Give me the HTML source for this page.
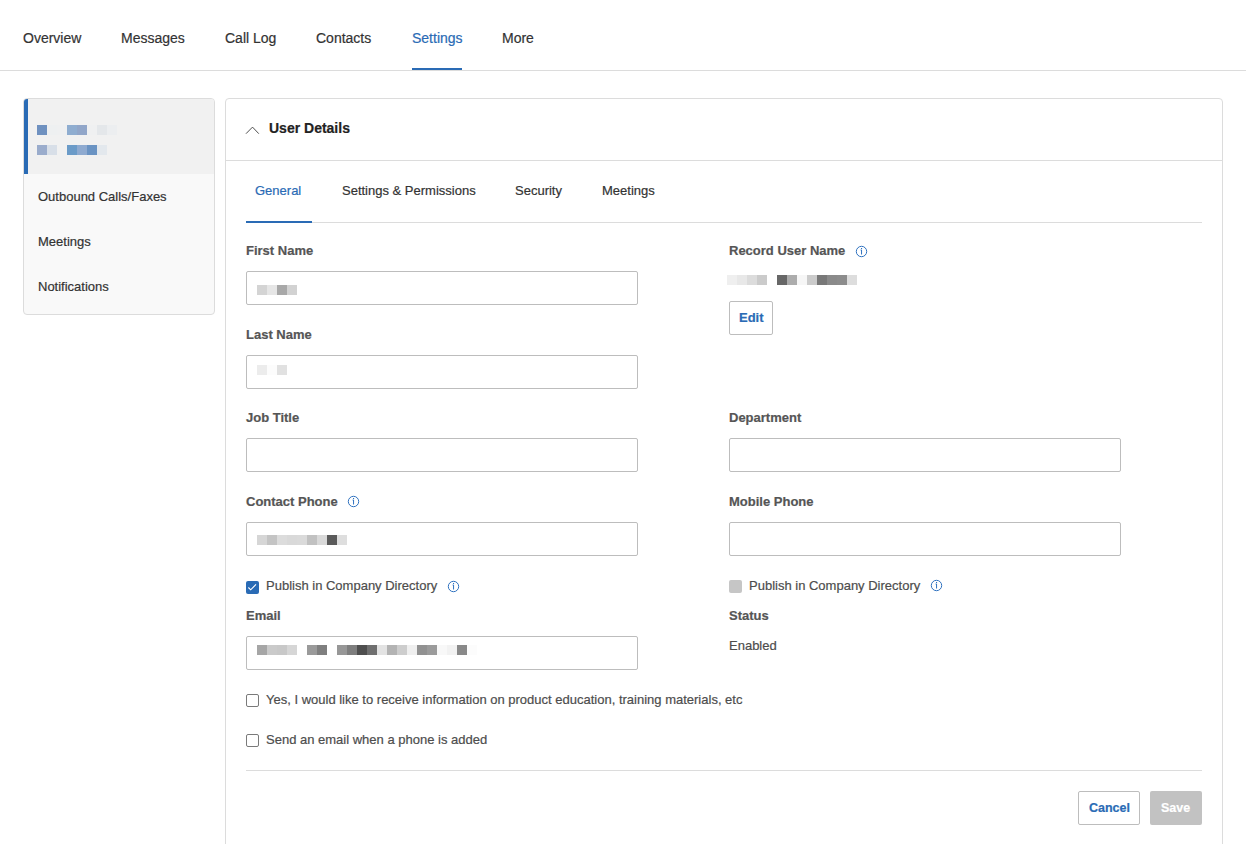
<!DOCTYPE html>
<html><head><meta charset="utf-8">
<style>
*{box-sizing:border-box;margin:0;padding:0}
html,body{width:1246px;height:844px;overflow:hidden;background:#fff}
body{position:relative;-webkit-text-stroke:0.2px currentColor;font-family:"Liberation Sans",sans-serif;color:#333}
.a{position:absolute;white-space:nowrap}
.nav{font-size:14px;line-height:14px;color:#333}
.t13{font-size:13px;line-height:13px}
.lbl{font-size:13px;line-height:13px;font-weight:bold;color:#555}
.inp{position:absolute;width:392px;height:34px;border:1px solid #bdbdbd;border-radius:2px;background:#fff}
.px{position:absolute;width:10px;height:10px}
.cb{position:absolute;width:13px;height:13px;border:1px solid #7a7a7a;border-radius:2px;background:#fff}
.info{position:absolute;width:13px;height:13px}
.blue{color:#2a6bb5}
</style></head><body>

<!-- top nav -->
<div class="a nav" style="left:23px;top:31px">Overview</div>
<div class="a nav" style="left:121px;top:31px">Messages</div>
<div class="a nav" style="left:225px;top:31px">Call Log</div>
<div class="a nav" style="left:316px;top:31px">Contacts</div>
<div class="a nav blue" style="left:412px;top:31px">Settings</div>
<div class="a nav" style="left:502px;top:31px">More</div>
<div class="a" style="left:0;top:70px;width:1246px;height:1px;background:#dcdcdc"></div>
<div class="a" style="left:412px;top:68px;width:50px;height:2px;background:#2a6bb5"></div>

<!-- sidebar -->
<div class="a" style="left:23px;top:98px;width:192px;height:217px;border:1px solid #dcdcdc;border-radius:4px;background:#f9f9f9;overflow:hidden">
  <div class="a" style="left:0;top:0;width:190px;height:75px;background:#f1f1f1"></div>
  <div class="a" style="left:0;top:0;width:4px;height:75px;background:#2a6bb5"></div>
</div>

<div class="a t13" style="left:38px;top:190px;color:#333">Outbound Calls/Faxes</div>
<div class="a t13" style="left:38px;top:235px;color:#333">Meetings</div>
<div class="a t13" style="left:38px;top:280px;color:#333">Notifications</div>

<!-- main panel -->
<div class="a" style="left:225px;top:98px;width:998px;height:800px;border:1px solid #dcdcdc;border-radius:4px;background:#fff"></div>
<svg class="a" style="left:245px;top:125px" width="16" height="10" viewBox="0 0 16 10"><path d="M1 8.7 L7.5 2.1 L13.8 8.7" fill="none" stroke="#3a3a3a" stroke-width="0.9"/></svg>
<div class="a" style="left:269px;top:121px;font-size:14px;line-height:14px;font-weight:bold;color:#222">User Details</div>
<div class="a" style="left:226px;top:160px;width:996px;height:1px;background:#dcdcdc"></div>

<!-- tabs -->
<div class="a t13 blue" style="left:255px;top:184px">General</div>
<div class="a t13" style="left:342px;top:184px;color:#333">Settings &amp; Permissions</div>
<div class="a t13" style="left:515px;top:184px;color:#333">Security</div>
<div class="a t13" style="left:602px;top:184px;color:#333">Meetings</div>
<div class="a" style="left:246px;top:222px;width:956px;height:1px;background:#dcdcdc"></div>
<div class="a" style="left:246px;top:221px;width:66px;height:2px;background:#2a6bb5"></div>

<!-- form labels left -->
<div class="a lbl" style="left:246px;top:244px">First Name</div>
<div class="inp" style="left:246px;top:271px"></div>
<div class="a lbl" style="left:246px;top:328px">Last Name</div>
<div class="inp" style="left:246px;top:355px"></div>
<div class="a lbl" style="left:246px;top:411px">Job Title</div>
<div class="inp" style="left:246px;top:438px"></div>
<div class="a lbl" style="left:246px;top:495px">Contact Phone</div>
<svg class="info" style="left:347px;top:495px" viewBox="0 0 13 13"><circle cx="6.5" cy="6.5" r="5.2" fill="none" stroke="#2f72c0" stroke-width="1"/><rect x="6" y="3" width="1.1" height="1.1" fill="#2f72c0"/><path d="M5.6 5 H6.55 V9.5" fill="none" stroke="#2f72c0" stroke-width="1"/></svg>
<div class="inp" style="left:246px;top:522px"></div>
<div class="a lbl" style="left:246px;top:609px">Email</div>
<div class="inp" style="left:246px;top:636px"></div>

<!-- right column -->
<div class="a lbl" style="left:729px;top:244px">Record User Name</div>
<svg class="info" style="left:855px;top:245px" viewBox="0 0 13 13"><circle cx="6.5" cy="6.5" r="5.2" fill="none" stroke="#2f72c0" stroke-width="1"/><rect x="6" y="3" width="1.1" height="1.1" fill="#2f72c0"/><path d="M5.6 5 H6.55 V9.5" fill="none" stroke="#2f72c0" stroke-width="1"/></svg>
<div class="a" style="left:729px;top:301px;width:44px;height:34px;border:1px solid #bdbdbd;border-radius:2px;background:#fff"></div>
<div class="a lbl blue" style="left:739px;top:311px;color:#2a6bb5">Edit</div>
<div class="a lbl" style="left:729px;top:411px">Department</div>
<div class="inp" style="left:729px;top:438px"></div>
<div class="a lbl" style="left:729px;top:495px">Mobile Phone</div>
<div class="inp" style="left:729px;top:522px"></div>

<!-- publish checkboxes -->
<div class="a" style="left:246px;top:581px;width:13px;height:13px;border-radius:2px;background:#2a6bb5"></div>
<svg class="a" style="left:246px;top:581px" width="13" height="13" viewBox="0 0 13 13"><path d="M2.4 6.5 L4.7 8.8 L10 3.3" fill="none" stroke="#fff" stroke-width="1.15"/></svg>
<div class="a t13" style="left:266px;top:579px;color:#4d4d4d">Publish in Company Directory</div>
<svg class="info" style="left:447px;top:580px" viewBox="0 0 13 13"><circle cx="6.5" cy="6.5" r="5.2" fill="none" stroke="#2f72c0" stroke-width="1"/><rect x="6" y="3" width="1.1" height="1.1" fill="#2f72c0"/><path d="M5.6 5 H6.55 V9.5" fill="none" stroke="#2f72c0" stroke-width="1"/></svg>

<div class="a" style="left:729px;top:580px;width:13px;height:13px;border-radius:2px;background:#c6c6c6"></div>
<div class="a t13" style="left:749px;top:579px;color:#4d4d4d">Publish in Company Directory</div>
<svg class="info" style="left:930px;top:579px" viewBox="0 0 13 13"><circle cx="6.5" cy="6.5" r="5.2" fill="none" stroke="#2f72c0" stroke-width="1"/><rect x="6" y="3" width="1.1" height="1.1" fill="#2f72c0"/><path d="M5.6 5 H6.55 V9.5" fill="none" stroke="#2f72c0" stroke-width="1"/></svg>

<div class="a lbl" style="left:729px;top:609px">Status</div>
<div class="a t13" style="left:729px;top:639px;color:#4d4d4d">Enabled</div>

<!-- bottom checkboxes -->
<div class="cb" style="left:246px;top:694px"></div>
<div class="a t13" style="left:266px;top:693px;color:#4d4d4d">Yes, I would like to receive information on product education, training materials, etc</div>
<div class="cb" style="left:246px;top:734px"></div>
<div class="a t13" style="left:266px;top:733px;color:#4d4d4d">Send an email when a phone is added</div>

<div class="a" style="left:246px;top:770px;width:956px;height:1px;background:#dcdcdc"></div>
<div class="a" style="left:1078px;top:791px;width:62px;height:34px;border:1px solid #bdbdbd;border-radius:2px;background:#fff"></div>
<div class="a lbl" style="left:1089px;top:801px;color:#2a6bb5;font-size:12.5px;line-height:14px">Cancel</div>
<div class="a" style="left:1150px;top:791px;width:52px;height:34px;border-radius:2px;background:#c2c2c2"></div>
<div class="a lbl" style="left:1161px;top:801px;color:#fff;font-size:12.5px;line-height:14px">Save</div>

<!-- sb1 -->
<i class="px" style="left:37px;top:125px;background:#6f91c0"></i><i class="px" style="left:47px;top:125px;background:#eef0f1"></i><i class="px" style="left:57px;top:125px;background:#eff0f1"></i><i class="px" style="left:67px;top:125px;background:#8fadd0"></i><i class="px" style="left:77px;top:125px;background:#91a6c9"></i><i class="px" style="left:87px;top:125px;background:#eff0f1"></i><i class="px" style="left:97px;top:125px;background:#e4e7ea"></i><i class="px" style="left:107px;top:125px;background:#eceef0"></i>
<!-- sb2 -->
<i class="px" style="left:37px;top:145px;background:#9aaccc"></i><i class="px" style="left:47px;top:145px;background:#d8dfe8"></i><i class="px" style="left:67px;top:145px;background:#6b9bc8"></i><i class="px" style="left:77px;top:145px;background:#8eaad0"></i><i class="px" style="left:87px;top:145px;background:#6a93c3"></i><i class="px" style="left:97px;top:145px;background:#e3e8ed"></i>
<!-- rec -->
<i class="px" style="left:727px;top:275px;background:#efefef"></i><i class="px" style="left:737px;top:275px;background:#e8e8e8"></i><i class="px" style="left:747px;top:275px;background:#dcdcdc"></i><i class="px" style="left:757px;top:275px;background:#cbcbcb"></i><i class="px" style="left:777px;top:275px;background:#676767"></i><i class="px" style="left:787px;top:275px;background:#acacac"></i><i class="px" style="left:797px;top:275px;background:#f6f6f6"></i><i class="px" style="left:807px;top:275px;background:#cbcbcb"></i><i class="px" style="left:817px;top:275px;background:#787878"></i><i class="px" style="left:827px;top:275px;background:#8a8a8a"></i><i class="px" style="left:837px;top:275px;background:#8c8c8c"></i><i class="px" style="left:847px;top:275px;background:#dddddd"></i>
<!-- fn -->
<i class="px" style="left:257px;top:285px;background:#d4d4d4"></i><i class="px" style="left:267px;top:285px;background:#e6e6e6"></i><i class="px" style="left:277px;top:285px;background:#a8a8a8"></i><i class="px" style="left:287px;top:285px;background:#d2d2d2"></i>
<!-- ln -->
<i class="px" style="left:257px;top:365px;background:#ececec"></i><i class="px" style="left:267px;top:365px;background:#fcfcfc"></i><i class="px" style="left:277px;top:365px;background:#e1e1e1"></i>
<!-- cp -->
<i class="px" style="left:257px;top:535px;background:#d6d6d6"></i><i class="px" style="left:267px;top:535px;background:#c4c4c4"></i><i class="px" style="left:277px;top:535px;background:#dcdcdc"></i><i class="px" style="left:287px;top:535px;background:#d9d9d9"></i><i class="px" style="left:297px;top:535px;background:#dadada"></i><i class="px" style="left:307px;top:535px;background:#c1c1c1"></i><i class="px" style="left:317px;top:535px;background:#d9d9d9"></i><i class="px" style="left:327px;top:535px;background:#5a5a5a"></i><i class="px" style="left:337px;top:535px;background:#dedede"></i>
<!-- em -->
<i class="px" style="left:257px;top:645px;background:#a6a6a6"></i><i class="px" style="left:267px;top:645px;background:#cacaca"></i><i class="px" style="left:277px;top:645px;background:#c8c8c8"></i><i class="px" style="left:287px;top:645px;background:#d6d6d6"></i><i class="px" style="left:307px;top:645px;background:#9a9a9a"></i><i class="px" style="left:317px;top:645px;background:#7f7f7f"></i><i class="px" style="left:337px;top:645px;background:#979797"></i><i class="px" style="left:347px;top:645px;background:#7e7e7e"></i><i class="px" style="left:357px;top:645px;background:#4e4e4e"></i><i class="px" style="left:367px;top:645px;background:#6f6f6f"></i><i class="px" style="left:377px;top:645px;background:#e3e3e3"></i><i class="px" style="left:387px;top:645px;background:#b3b3b3"></i><i class="px" style="left:397px;top:645px;background:#cdcdcd"></i><i class="px" style="left:407px;top:645px;background:#efefef"></i><i class="px" style="left:417px;top:645px;background:#919191"></i><i class="px" style="left:427px;top:645px;background:#9b9b9b"></i><i class="px" style="left:437px;top:645px;background:#f8f8f8"></i><i class="px" style="left:447px;top:645px;background:#f2f2f2"></i><i class="px" style="left:457px;top:645px;background:#898989"></i><i class="px" style="left:467px;top:645px;background:#fcfcfc"></i>

</body></html>
